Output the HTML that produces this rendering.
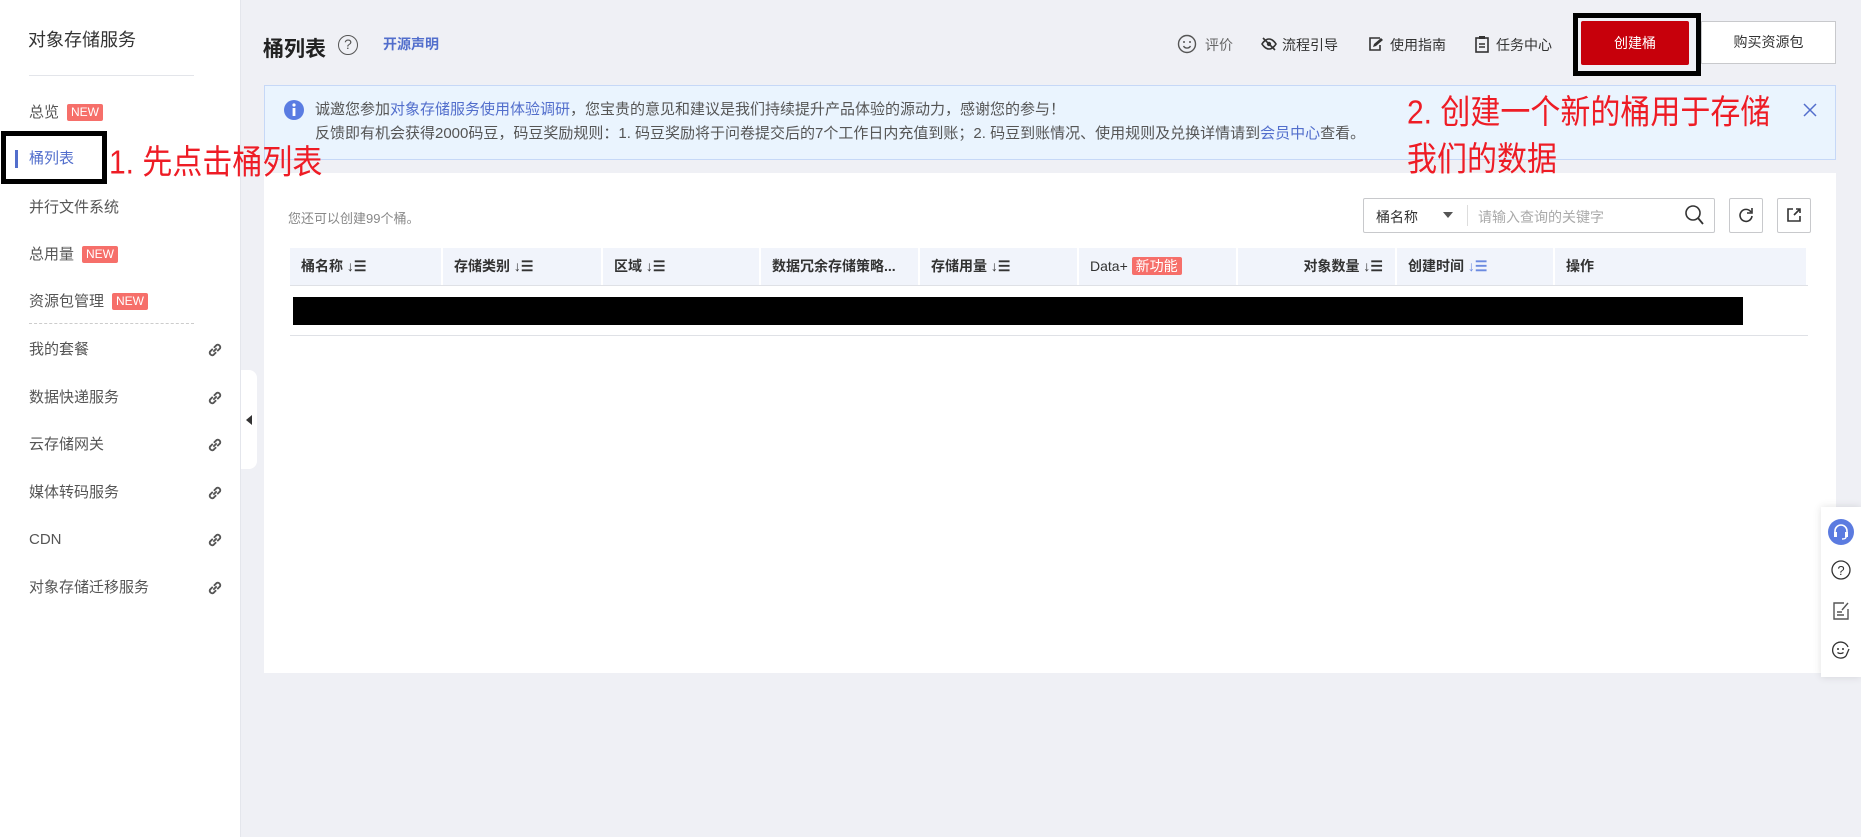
<!DOCTYPE html>
<html><head><meta charset="utf-8"><style>
*{margin:0;padding:0;box-sizing:border-box}
body{width:1861px;height:837px;background:#eff0f5;font-family:"Liberation Sans","Noto Sans CJK SC",sans-serif;position:relative;overflow:hidden;color:#333}
.a{position:absolute;white-space:nowrap}
.side{position:absolute;left:0;top:0;width:241px;height:837px;background:#fff;border-right:1px solid #e4e6ec}
.mi{position:absolute;left:29px;font-size:15px;color:#555;line-height:20px;transform:translateY(-10px)}
.new{display:inline-block;background:#f66f6a;color:#fff;font-size:12px;line-height:17px;padding:0 4px;margin-left:8px;border-radius:2px;vertical-align:1px}
.lk{position:absolute;left:206px;width:18px;height:18px;transform:translateY(-9px)}
.th{position:absolute;top:248px;height:37px;background:#f1f4fb;font-size:14px;font-weight:bold;color:#333;line-height:37px;padding-left:11px;border-right:2px solid #fff}
.red{color:#ee1c25;font-size:30px;font-family:"Liberation Sans","Noto Sans CJK SC",sans-serif;transform:scaleY(1.12);transform-origin:left top;z-index:5}
</style></head><body>
<div class="side">
<div class="a" style="left:28px;top:26px;font-size:18px;color:#333">对象存储服务</div>
<div class="a" style="left:29px;top:75px;width:165px;height:1px;background:#e3e5ea"></div>
<div class="mi" style="top:113px">总览<span class="new">NEW</span></div>
<div class="a" style="left:15px;top:150px;width:3px;height:18px;background:#526ecc"></div>
<div class="mi" style="top:159px;color:#526ecc">桶列表</div>
<div class="mi" style="top:208px">并行文件系统</div>
<div class="mi" style="top:255px">总用量<span class="new">NEW</span></div>
<div class="mi" style="top:302px">资源包管理<span class="new">NEW</span></div>
<div class="a" style="left:29px;top:323px;width:165px;border-top:1px dashed #ccc"></div>
<div class="mi" style="top:350px">我的套餐</div>
<div class="mi" style="top:398px">数据快递服务</div>
<div class="mi" style="top:445px">云存储网关</div>
<div class="mi" style="top:493px">媒体转码服务</div>
<div class="mi" style="top:540px">CDN</div>
<div class="mi" style="top:588px">对象存储迁移服务</div>
<svg class="lk" style="top:350px" viewBox="0 0 16 16"><g fill="none" stroke="#555" stroke-width="1.6"><path d="M6.5 9.5l3-3M6 7L3.5 9.5a2.3 2.3 0 0 0 3 3L9 10M10 9l2.5-2.5a2.3 2.3 0 0 0-3-3L7 6"/></g></svg>
<svg class="lk" style="top:398px" viewBox="0 0 16 16"><g fill="none" stroke="#555" stroke-width="1.6"><path d="M6.5 9.5l3-3M6 7L3.5 9.5a2.3 2.3 0 0 0 3 3L9 10M10 9l2.5-2.5a2.3 2.3 0 0 0-3-3L7 6"/></g></svg>
<svg class="lk" style="top:445px" viewBox="0 0 16 16"><g fill="none" stroke="#555" stroke-width="1.6"><path d="M6.5 9.5l3-3M6 7L3.5 9.5a2.3 2.3 0 0 0 3 3L9 10M10 9l2.5-2.5a2.3 2.3 0 0 0-3-3L7 6"/></g></svg>
<svg class="lk" style="top:493px" viewBox="0 0 16 16"><g fill="none" stroke="#555" stroke-width="1.6"><path d="M6.5 9.5l3-3M6 7L3.5 9.5a2.3 2.3 0 0 0 3 3L9 10M10 9l2.5-2.5a2.3 2.3 0 0 0-3-3L7 6"/></g></svg>
<svg class="lk" style="top:540px" viewBox="0 0 16 16"><g fill="none" stroke="#555" stroke-width="1.6"><path d="M6.5 9.5l3-3M6 7L3.5 9.5a2.3 2.3 0 0 0 3 3L9 10M10 9l2.5-2.5a2.3 2.3 0 0 0-3-3L7 6"/></g></svg>
<svg class="lk" style="top:588px" viewBox="0 0 16 16"><g fill="none" stroke="#555" stroke-width="1.6"><path d="M6.5 9.5l3-3M6 7L3.5 9.5a2.3 2.3 0 0 0 3 3L9 10M10 9l2.5-2.5a2.3 2.3 0 0 0-3-3L7 6"/></g></svg>
</div>
<div class="a" style="left:241px;top:370px;width:16px;height:99px;background:#fff;border-radius:0 8px 8px 0"></div>
<div class="a" style="left:246px;top:415px;width:0;height:0;border-top:5px solid transparent;border-bottom:5px solid transparent;border-right:6px solid #333"></div>
<!-- annotation 1 -->
<div class="a" style="left:1px;top:131px;width:106px;height:53px;border:5px solid #000"></div>
<div class="a red" style="left:109px;top:141px;line-height:40px">1. 先点击桶列表</div>
<!-- header -->
<div class="a" style="left:263px;top:33px;font-size:21px;font-weight:bold;color:#222">桶列表</div>
<div class="a" style="left:338px;top:35px;width:20px;height:20px;border:1.5px solid #555;border-radius:50%;font-size:14px;text-align:center;line-height:17px;color:#555">?</div>
<div class="a" style="left:383px;top:34px;font-size:14px;font-weight:bold;color:#526ecc">开源声明</div>
<svg class="a" style="left:1177px;top:34px" width="20" height="20" viewBox="0 0 20 20"><circle cx="10" cy="10" r="8.5" fill="none" stroke="#555" stroke-width="1.4"/><circle cx="7" cy="8" r="1" fill="#555"/><circle cx="13" cy="8" r="1" fill="#555"/><path d="M6.5 12a4 4 0 0 0 7 0" fill="none" stroke="#555" stroke-width="1.4"/></svg>
<div class="a" style="left:1205px;top:35px;font-size:14px;color:#666">评价</div>
<svg class="a" style="left:1261px;top:36px" width="16" height="16" viewBox="0 0 16 16"><path d="M1 8s3-5 7-5 7 5 7 5-3 5-7 5-7-5-7-5z" fill="none" stroke="#333" stroke-width="1.6"/><circle cx="8" cy="8" r="2.2" fill="#333"/><path d="M2 2l12 12" stroke="#333" stroke-width="1.6"/></svg>
<div class="a" style="left:1282px;top:35px;font-size:14px">流程引导</div>
<svg class="a" style="left:1368px;top:36px" width="16" height="16" viewBox="0 0 16 16"><path d="M12 2H2v12h10V9" fill="none" stroke="#333" stroke-width="1.6"/><path d="M5 11l1-3 7-6 2 2-7 6z" fill="#333"/></svg>
<div class="a" style="left:1390px;top:35px;font-size:14px">使用指南</div>
<svg class="a" style="left:1475px;top:35px" width="14" height="18" viewBox="0 0 14 18"><rect x="1" y="3" width="12" height="14" fill="none" stroke="#333" stroke-width="1.6"/><rect x="4" y="1" width="6" height="3" fill="#333"/><path d="M4 9h6M4 12h6" stroke="#333" stroke-width="1.5"/></svg>
<div class="a" style="left:1496px;top:35px;font-size:14px">任务中心</div>
<div class="a" style="left:1573px;top:13px;width:128px;height:63px;border:5px solid #000"></div>
<div class="a" style="left:1581px;top:21px;width:108px;height:44px;background:#c7000b;border-radius:2px;color:#fff;font-size:14px;text-align:center;line-height:44px">创建桶</div>
<div class="a" style="left:1701px;top:21px;width:135px;height:43px;background:#fff;border:1px solid #c8c9cc;font-size:14px;text-align:center;line-height:41px;color:#333">购买资源包</div>
<!-- notice -->
<div class="a" style="left:264px;top:85px;width:1572px;height:75px;background:#eaf4fe;border:1px solid #c6d8f7"></div>
<svg class="a" style="left:284px;top:100px" width="20" height="20" viewBox="0 0 20 20"><circle cx="10" cy="10" r="10" fill="#5a7ce2"/><rect x="8.6" y="8" width="2.8" height="8" fill="#fff"/><circle cx="10" cy="5" r="1.6" fill="#fff"/></svg>
<div class="a" style="left:315px;top:100px;font-size:15px;color:#555;line-height:19px">诚邀您参加<span style="color:#526ecc">对象存储服务使用体验调研</span>，您宝贵的意见和建议是我们持续提升产品体验的源动力，感谢您的参与！</div>
<div class="a" style="left:315px;top:124px;font-size:15px;color:#555;line-height:19px">反馈即有机会获得2000码豆，码豆奖励规则：1. 码豆奖励将于问卷提交后的7个工作日内充值到账；2. 码豆到账情况、使用规则及兑换详情请到<span style="color:#526ecc">会员中心</span>查看。</div>
<svg class="a" style="left:1803px;top:103px" width="14" height="14" viewBox="0 0 14 14"><path d="M1 1l12 12M13 1L1 13" stroke="#526ecc" stroke-width="1.5"/></svg>
<!-- panel -->
<div class="a" style="left:264px;top:173px;width:1572px;height:500px;background:#fff"></div>
<div class="a red" style="left:1407px;top:91px;line-height:40px">2. 创建一个新的桶用于存储</div>
<div class="a red" style="left:1407px;top:138px;line-height:40px">我们的数据</div>
<div class="a" style="left:288px;top:208px;font-size:13px;color:#888">您还可以创建99个桶。</div>
<div class="a" style="left:1363px;top:198px;width:352px;height:35px;border:1px solid #c8c9cc;border-radius:2px"></div>
<div class="a" style="left:1376px;top:207px;font-size:14px;color:#333">桶名称</div>
<div class="a" style="left:1443px;top:212px;border-left:5px solid transparent;border-right:5px solid transparent;border-top:6px solid #555"></div>
<div class="a" style="left:1467px;top:205px;width:1px;height:21px;background:#ddd"></div>
<div class="a" style="left:1478px;top:207px;font-size:14px;color:#aaa">请输入查询的关键字</div>
<svg class="a" style="left:1684px;top:204px" width="20" height="22" viewBox="0 0 20 22"><circle cx="9" cy="9" r="7" fill="none" stroke="#333" stroke-width="1.6"/><path d="M14 14l5 6" stroke="#333" stroke-width="1.8"/></svg>
<div class="a" style="left:1729px;top:198px;width:34px;height:35px;border:1px solid #c8c9cc;border-radius:2px"></div>
<svg class="a" style="left:1738px;top:207px" width="16" height="16" viewBox="0 0 16 16"><path d="M13 5A6 6 0 1 0 14 9" fill="none" stroke="#333" stroke-width="1.6"/><path d="M14 1v5H9" fill="none" stroke="#333" stroke-width="1.6"/></svg>
<div class="a" style="left:1777px;top:198px;width:34px;height:35px;border:1px solid #c8c9cc;border-radius:2px"></div>
<svg class="a" style="left:1786px;top:207px" width="16" height="16" viewBox="0 0 16 16"><path d="M7 2H2v12h12V9" fill="none" stroke="#333" stroke-width="1.6"/><path d="M8 8l6-6M10 2h4v4" fill="none" stroke="#333" stroke-width="1.6"/></svg>
<!-- table header -->
<div class="th" style="left:290px;width:153px">桶名称 ↓☰</div>
<div class="th" style="left:443px;width:160px">存储类别 ↓☰</div>
<div class="th" style="left:603px;width:158px">区域 ↓☰</div>
<div class="th" style="left:761px;width:159px">数据冗余存储策略...</div>
<div class="th" style="left:920px;width:159px">存储用量 ↓☰</div>
<div class="th" style="left:1079px;width:159px;font-weight:normal">Data+ <span style="background:#f66f6a;color:#fff;padding:1px 4px;border-radius:2px;font-size:14px">新功能</span></div>
<div class="th" style="left:1238px;width:159px;text-align:right;padding-right:12px">对象数量 ↓☰</div>
<div class="th" style="left:1397px;width:158px">创建时间 <span style="color:#6b8ae0">↓☰</span></div>
<div class="th" style="left:1555px;width:253px">操作</div>
<div class="a" style="left:290px;top:285px;width:1518px;height:1px;background:#dfe1e6"></div>
<div class="a" style="left:293px;top:297px;width:1450px;height:28px;background:#000"></div>
<div class="a" style="left:290px;top:335px;width:1518px;height:1px;background:#dfe1e6"></div>
<!-- right toolbar -->
<div class="a" style="left:1821px;top:507px;width:40px;height:170px;background:#fff;box-shadow:0 0 8px rgba(0,0,0,.12)"></div>
<svg class="a" style="left:1828px;top:519px" width="26" height="26" viewBox="0 0 26 26"><circle cx="13" cy="13" r="13" fill="#5b7be0"/><path d="M7 15v-3a6 6 0 0 1 12 0v3" fill="none" stroke="#fff" stroke-width="1.6"/><rect x="6" y="13" width="3" height="5" fill="#fff"/><rect x="17" y="13" width="3" height="5" fill="#fff"/><path d="M18 18q0 2-4 2" stroke="#fff" stroke-width="1.4" fill="none"/></svg>
<svg class="a" style="left:1831px;top:560px" width="20" height="20" viewBox="0 0 20 20"><circle cx="10" cy="10" r="9" fill="none" stroke="#333" stroke-width="1.3"/><text x="10" y="15" font-size="13" text-anchor="middle" fill="#333" font-family="Liberation Sans">?</text></svg>
<svg class="a" style="left:1832px;top:601px" width="18" height="20" viewBox="0 0 18 20"><path d="M12 2H2v16h14V8" fill="none" stroke="#555" stroke-width="1.4"/><path d="M5 11h5M5 14h7M10 9l6-7" stroke="#555" stroke-width="1.4"/></svg>
<svg class="a" style="left:1831px;top:640px" width="20" height="20" viewBox="0 0 20 20"><path d="M17 7A8 8 0 1 0 15 16" fill="none" stroke="#333" stroke-width="1.3"/><circle cx="7" cy="9" r="1" fill="#333"/><circle cx="12" cy="9" r="1" fill="#333"/><path d="M6.5 12.5a4 3 0 0 0 6 0M15 16l3-7" fill="none" stroke="#333" stroke-width="1.3"/></svg>
</body></html>
